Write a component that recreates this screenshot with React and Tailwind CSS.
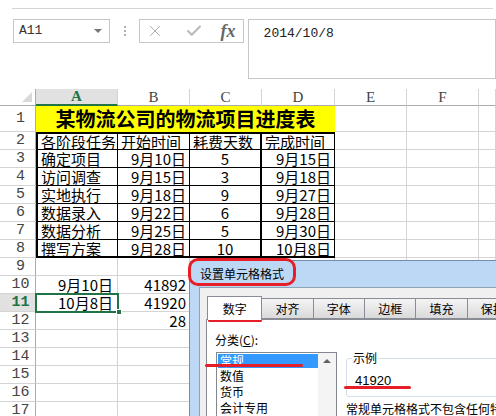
import { X, Check } from "lucide-react";

const table = [
  ["确定项目", "9月10日", "5", "9月15日"],
  ["访问调查", "9月15日", "3", "9月18日"],
  ["实地执行", "9月18日", "9", "9月27日"],
  ["数据录入", "9月22日", "6", "9月28日"],
  ["数据分析", "9月25日", "5", "9月30日"],
  ["撰写方案", "9月28日", "10", "10月8日"],
];

const extra = {
  10: ["9月10日", "41892"],
  11: ["10月8日", "41920"],
  12: ["", "28"],
};

const cell = "flex items-center whitespace-nowrap leading-[15px]";
const gray = "border-r border-b border-[#d4d4d4]";

function RowHead({ n, active }) {
  return (
    <div
      className={`flex items-center justify-center pl-[6px] leading-[15px] border-r border-r-[#ababab] border-b border-b-[#d4d4d4] font-['Liberation_Mono',monospace] text-[15px] ${
        active ? "bg-[#e1e1e1] text-[#217346] font-bold" : "text-[#444]"
      }`}
    >
      {n}
    </div>
  );
}

function Blank({ n = 3 }) {
  return Array.from({ length: n }).map((_, i) => <div key={i} className={gray} />);
}

export default function App() {
  return (
    <div className="relative w-[496px] h-[416px] overflow-hidden bg-white font-['Noto_Sans_CJK_SC',sans-serif]">
      {/* formula area */}
      <div className="h-[89px]">
        <div className="ml-[12px] mr-[3px] h-[9px] border-b border-[#d5d5d5]" />
        <div className="flex items-start mt-[10px]">
          <div className="ml-[13px] w-[101px] h-[24px] border border-[#c6c6c6] flex items-center justify-between pl-[5px] pr-[7px]">
            <span className="font-['Liberation_Mono',monospace] text-[13px] leading-[16px] text-[#333]">A11</span>
            <span className="w-0 h-0 border-l-[4px] border-r-[4px] border-t-[4px] border-l-transparent border-r-transparent border-t-[#777]" />
          </div>
          <div className="w-[31px] h-[24px] flex flex-col items-center justify-center gap-[2px]">
            <span className="w-[2px] h-[2px] bg-[#b0b0b0]" />
            <span className="w-[2px] h-[2px] bg-[#b0b0b0]" />
            <span className="w-[2px] h-[2px] bg-[#b0b0b0]" />
          </div>
          <div className="w-[109px] h-[24px] border border-[#c6c6c6] flex items-center pl-[6px]">
            <X size={18} strokeWidth={1.3} className="text-[#a8a8a8]" />
            <Check size={18} strokeWidth={2.6} className="ml-[21px] text-[#b8b8b8]" />
            <span className="ml-[17px] font-['Liberation_Serif',serif] italic font-bold text-[18px] text-[#666] leading-none">fx</span>
          </div>
          <div className="ml-[4px] w-[260px] h-[60px] border border-[#c6c6c6] pl-[15px] pt-[5px] font-['Liberation_Mono',monospace] text-[13px] leading-[18px] text-[#222]">
            2014/10/8
          </div>
        </div>
      </div>

      {/* sheet */}
      <div className="grid grid-cols-[36px_82px_72px_72px_73px_72px_72px_17px] grid-rows-[17px_26px_repeat(16,18px)] text-[15px] text-black">
        {/* column headers */}
        <div className="relative border-r border-r-[#ababab] border-b border-b-[#ababab]">
          <span className="absolute right-[3px] bottom-[3px] w-0 h-0 border-l-[10px] border-l-transparent border-b-[10px] border-b-[#d8d8d8]" />
        </div>
        <div className="flex items-center justify-center leading-[15px] bg-[#e1e1e1] border-r border-r-[#d4d4d4] border-b-2 border-b-[#217346] font-['Liberation_Serif',serif] font-bold text-[15px] text-[#217346]">A</div>
        {["B", "C", "D", "E", "F", ""].map((c, i) => (
          <div key={i} className="flex items-center justify-center leading-[15px] border-r border-r-[#d4d4d4] border-b border-b-[#ababab] font-['Liberation_Serif',serif] text-[15px] text-[#444]">
            {c}
          </div>
        ))}

        {/* row 1 */}
        <RowHead n={1} />
        <div className="flex items-center justify-center whitespace-nowrap col-span-4 bg-[#ffff00] font-bold text-[20px] leading-[22px]">某物流公司的物流项目进度表</div>
        <Blank />

        {/* row 2 */}
        <RowHead n={2} />
        <div className={`${cell} pl-[3px] border-l-2 border-l-black border-t-2 border-t-black border-r border-r-black border-b border-b-black`}>各阶段任务</div>
        <div className={`${cell} pl-[3px] border-t-2 border-t-black border-r border-r-black border-b border-b-black`}>开始时间</div>
        <div className={`${cell} pl-[3px] border-t-2 border-t-black border-r-2 border-r-black border-b border-b-black`}>耗费天数</div>
        <div className={`${cell} pl-[3px] border-t-2 border-t-black border-r border-r-black border-b border-b-black`}>完成时间</div>
        <Blank />

        {/* rows 3-8 */}
        {table.map((r, i) => {
          const last = i === table.length - 1;
          const bb = last ? "border-b-2 border-b-black" : "border-b border-b-black";
          return [
            <RowHead key={`h${i}`} n={i + 3} />,
            <div key={`a${i}`} className={`${cell} pl-[3px] border-l-2 border-l-black border-r border-r-black ${bb}`}>{r[0]}</div>,
            <div key={`b${i}`} className={`${cell} justify-end pr-[3px] border-r border-r-black ${bb}`}>{r[1]}</div>,
            <div key={`c${i}`} className={`${cell} justify-center border-r-2 border-r-black ${bb}`}>{r[2]}</div>,
            <div key={`d${i}`} className={`${cell} justify-end pr-[3px] border-r border-r-black ${bb}`}>{r[3]}</div>,
            <Blank key={`x${i}`} />,
          ];
        })}

        {/* rows 9-17 */}
        {Array.from({ length: 9 }).map((_, i) => {
          const n = i + 9;
          const e = extra[n] || ["", ""];
          const active = n === 11;
          return [
            <RowHead key={`h${n}`} n={n} active={active} />,
            <div key={`a${n}`} className={`${cell} relative justify-end pr-[4px] ${gray} ${active ? "z-10" : ""}`}>
              {e[0]}
              {active && (
                <>
                  <span className="absolute left-[-1px] top-[-1px] w-[84px] h-[20px] border-2 border-[#217346]" />
                  <span className="absolute left-[80px] top-[15px] w-[6px] h-[6px] bg-[#217346] border border-white" />
                </>
              )}
            </div>,
            <div key={`b${n}`} className={`${cell} justify-end pr-[3px] ${gray}`}>{e[1]}</div>,
            <Blank key={`x${n}`} n={5} />,
          ];
        })}
      </div>

      {/* format cells dialog */}
      <div className="absolute left-[189px] top-[260px] w-[330px] h-[170px] border-l border-t border-[#6f8fb3] bg-[#bdd8f4] rounded-tl-[5px] text-[12px] leading-[14px] text-black">
        <div className="h-[26px] flex items-center pl-[10px]">设置单元格格式</div>
        <div className="ml-[9px] h-[160px] bg-[#f0f0f0] border-l border-t border-[#8ea3b8]">
          <div className="flex items-end pt-[8px] pl-[7px]">
            <div className="relative z-10 w-[56px] h-[24px] -mb-px bg-white border border-b-0 border-[#898c95] flex items-center justify-center">数字</div>
            {["对齐", "字体", "边框", "填充", "保护"].map((t) => (
              <div key={t} className="w-[53px] h-[21px] -ml-px border border-[#898c95] bg-gradient-to-b from-[#f4f4f4] to-[#dadada] flex items-center justify-center">
                {t}
              </div>
            ))}
          </div>
          <div className="ml-[6px] h-[120px] bg-white border-l border-t border-[#898c95] flex">
            <div className="w-[139px] shrink-0">
              <div className="pl-[8px] pt-[13px]">分类(<span className="underline">C</span>):</div>
              <div className="ml-[9px] mt-[5px] w-[121px] h-[80px] border border-[#828790] flex">
                <div className="flex-1 pt-px pl-px">
                  <div className="h-[14px] bg-[#3399ff] text-white pl-[2px]">常规</div>
                  <div className="h-[16px] leading-[16px] pl-[2px]">数值</div>
                  <div className="h-[16px] leading-[16px] pl-[2px]">货币</div>
                  <div className="h-[16px] leading-[16px] pl-[2px]">会计专用</div>
                  <div className="h-[16px] leading-[16px] pl-[2px]">日期</div>
                </div>
                <div className="w-[18px] bg-[#f4f4f4] flex justify-center pt-[6px]">
                  <span className="w-0 h-0 border-l-[4px] border-r-[4px] border-b-[4px] border-l-transparent border-r-transparent border-b-[#606060]" />
                </div>
              </div>
            </div>
            <div className="pt-[38px] w-[200px] shrink-0">
              <div className="relative h-[39px] border border-[#d5dfe5] rounded-[3px]">
                <span className="absolute -top-[8px] left-[5px] bg-white px-px">示例</span>
                <div className="pl-[8px] pt-[15px] font-['Liberation_Sans',sans-serif] text-[13px]">41920</div>
              </div>
              <div className="mt-[5px] whitespace-nowrap">常规单元格格式不包含任何特定的数字格式。</div>
            </div>
          </div>
        </div>
      </div>

      {/* red annotations */}
      <div className="absolute left-[188px] top-[258px] w-[108px] h-[28px] border-[3px] border-[#e61e28] rounded-[10px]" />
      <div className="absolute left-[208px] top-[319px] w-[54px] h-[3px] rounded-full bg-[#e61e28]" />
      <div className="absolute left-[205px] top-[364px] w-[98px] h-[3px] rounded-full bg-[#e61e28]" />
      <div className="absolute left-[344px] top-[386px] w-[67px] h-[3px] rounded-full bg-[#e61e28]" />
    </div>
  );
}
